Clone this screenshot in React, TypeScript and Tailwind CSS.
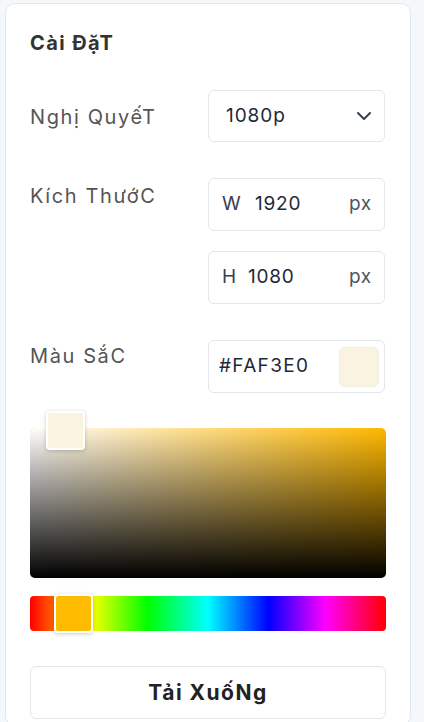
import { ChevronDown } from "lucide-react";

const font = { fontFamily: "Inter, 'Noto Sans', sans-serif" };

export default function App() {
  return (
    <div className="min-h-[722px] bg-[#f5f8fa] pl-[5px] pr-[13px] pt-[3px]" style={font}>
      <div className="bg-white border border-[#e3e6ea] rounded-[10px] px-6 pt-[24px] pb-[6px]">
        <h2 className="text-[20px] font-bold text-[#333] leading-[30px] tracking-[0.07em]">Cài ĐặT</h2>

        <div className="mt-[32px] grid grid-cols-[178px_177px] gap-y-5">
          {/* resolution */}
          <div className="flex items-center pt-[2px] text-[20px] text-[#555] tracking-[0.08em]">Nghị QuyếT</div>
          <div className="h-[52px] border border-[#e3e6ea] rounded-[6px] flex items-center justify-between pl-[17px] pr-[8px] text-[19px] text-[#1f2937] tracking-[0.05em]">
            <span>1080p</span>
            <ChevronDown className="w-6 h-6 text-[#374151]" strokeWidth={2} />
          </div>

          {/* size */}
          <div className="mt-4 pt-[3px] text-[20px] text-[#555] row-span-2 tracking-[0.08em]">Kích ThướC</div>
          <div className="mt-4 h-[53px] border border-[#e3e6ea] rounded-[6px] flex items-center pl-[13px] pr-[12px] text-[19px] text-[#1f2937] tracking-[0.04em]">
            <span className="text-[#374151] w-[33px]">W</span>
            <span className="flex-1">1920</span>
            <span className="text-[#4b5563]">px</span>
          </div>
          <div className="h-[53px] border border-[#e3e6ea] rounded-[6px] flex items-center pl-[13px] pr-[12px] text-[19px] text-[#1f2937] tracking-[0.04em]">
            <span className="text-[#374151] w-[26px]">H</span>
            <span className="flex-1">1080</span>
            <span className="text-[#4b5563]">px</span>
          </div>

          {/* color */}
          <div className="mt-4 pt-[1px] text-[20px] text-[#555] tracking-[0.08em]">Màu SắC</div>
          <div className="mt-4 h-[53px] border border-[#e3e6ea] rounded-[6px] flex items-center justify-between pl-[10px] pr-[5px] text-[19px] text-[#1f2937] tracking-[0.07em]">
            <span>#FAF3E0</span>
            <span className="w-[40px] h-[40px] rounded-[6px] bg-[#faf3e0] border border-[#f0ede4]" />
          </div>
        </div>

        {/* saturation / value picker */}
        <div className="relative mt-[35px] h-[150px] rounded-[5px] bg-[#ffb800]">
          <div className="absolute inset-0 rounded-[5px] bg-gradient-to-r from-white to-transparent" />
          <div className="absolute inset-0 rounded-[5px] bg-gradient-to-b from-transparent to-black" />
          <div className="absolute left-[16px] -top-[17px] w-[39px] h-[39px] rounded-[4px] bg-[#faf3e0] border-2 border-white shadow-[0_1px_4px_rgba(0,0,0,0.2)]" />
        </div>

        {/* hue */}
        <div
          className="relative mt-[18px] h-[35px] rounded-[4px]"
          style={{
            background:
              "linear-gradient(to right, #ff0000 0%, #ffff00 17%, #00ff00 33%, #00ffff 50%, #0000ff 67%, #ff00ff 83%, #ff0000 100%)",
          }}
        >
          <div className="absolute left-[24px] -top-[2px] w-[39px] h-[39px] rounded-[4px] bg-[#ffbb00] border-2 border-white shadow-[0_1px_4px_rgba(0,0,0,0.2)]" />
        </div>

        <button className="mt-[35px] w-full h-[53px] border border-[#e3e6ea] rounded-[6px] bg-white text-[21px] font-bold text-[#222] tracking-[0.07em]">
          Tải XuốNg
        </button>
      </div>
    </div>
  );
}
